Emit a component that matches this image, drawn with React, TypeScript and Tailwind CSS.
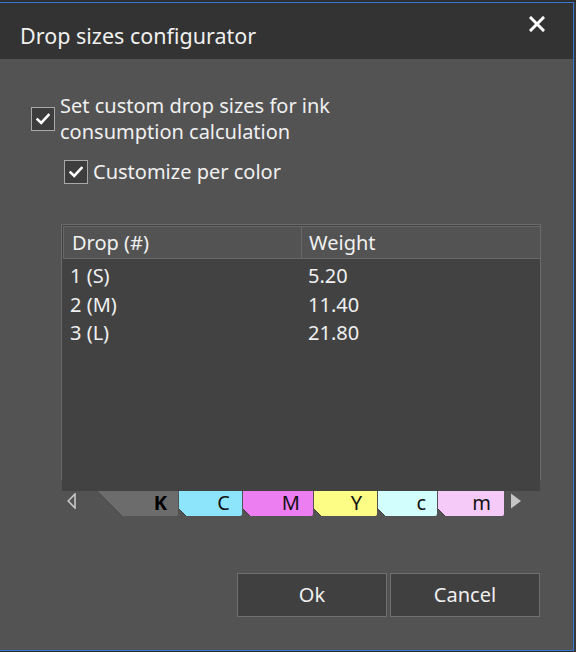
import React from "react";

const FONT = { fontFamily: '"Noto Sans", "Open Sans", sans-serif' };

function CheckBox() {
  return (
    <div className="w-[24px] h-[24px] border border-[#a9a9a9] bg-[#3d3d3d] flex items-center justify-center shrink-0">
      <svg width="14" height="12" viewBox="0 0 14 12">
        <path d="M1.5 6.5 L5.2 10 L12.5 2" fill="none" stroke="#ffffff" strokeWidth="2.6" strokeLinecap="square" />
      </svg>
    </div>
  );
}

type Tab = { label: string; bg: string; w: string; pr: string };

const tabs: Tab[] = [
  { label: "C", bg: "bg-[#8de5fb]", w: "w-[63px]", pr: "pr-[12px]" },
  { label: "M", bg: "bg-[#ec7ef1]", w: "w-[70px]", pr: "pr-[13px]" },
  { label: "Y", bg: "bg-[#fdfd85]", w: "w-[63px]", pr: "pr-[15px]" },
  { label: "c", bg: "bg-[#d2fefe]", w: "w-[59px]", pr: "pr-[11px]" },
  { label: "m", bg: "bg-[#f5c9f8]", w: "w-[66px]", pr: "pr-[13px]" },
];

const rows = [
  ["1 (S)", "5.20"],
  ["2 (M)", "11.40"],
  ["3 (L)", "21.80"],
];

export default function App() {
  return (
    <div className="w-[576px] h-[652px] bg-[#2c2c2c] flex flex-col overflow-hidden" style={FONT}>
      <div className="h-[2px] bg-[#2f2f2f] shrink-0" />
      <div className="flex flex-1">
        <div className="w-[574px] h-[649px] border-t border-r border-b border-[#3676d4] flex flex-col bg-[#535353] text-[#f0f0f0]">
          {/* title bar */}
          <div className="h-[56px] bg-[#333333] flex items-start justify-between shrink-0">
            <div className="pl-[20px] pt-[20px] text-[21.5px] leading-[26px]">Drop sizes configurator</div>
            <div className="pr-[28px] pt-[13px]">
              <svg width="16" height="16" viewBox="0 0 16 16">
                <path d="M2 2 L14 14 M14 2 L2 14" stroke="#ffffff" strokeWidth="3" strokeLinecap="square" />
              </svg>
            </div>
          </div>

          {/* body */}
          <div className="flex flex-col pt-[34px]">
            <div className="flex items-center pl-[31px] gap-[5px]">
              <CheckBox />
              <div className="text-[20px] leading-[26px]">
                Set custom drop sizes for ink
                <br />
                consumption calculation
              </div>
            </div>

            <div className="flex items-center pl-[64px] gap-[5px] mt-[14px]">
              <CheckBox />
              <div className="text-[20px] leading-[26px]">Customize per color</div>
            </div>

            {/* table panel */}
            <div className="ml-[61px] w-[480px] mt-[39px] flex flex-col">
              <div className="h-[256px] border border-b-0 border-[#6b6b6b] bg-[#424242] pt-[1px] pl-[1px]">
                <div className="flex h-[33px] bg-[#535353] border-t border-b border-l border-[#686868] text-[20px]">
                  <div className="w-[238px] border-r border-[#686868] pl-[8px] flex items-center">Drop (#)</div>
                  <div className="flex-1 pl-[7px] flex items-center">Weight</div>
                </div>
                <div className="pt-[3px] text-[20px]">
                  {rows.map(([d, w]) => (
                    <div key={d} className="flex h-[28.5px] items-center">
                      <div className="w-[239px] pl-[7px]">{d}</div>
                      <div className="flex-1 pl-[6px]">{w}</div>
                    </div>
                  ))}
                </div>
              </div>
              <div className="h-[11px] mx-[1px] bg-[#424242]" />
            </div>

            {/* color tabs */}
            <div className="flex h-[25px] items-stretch">
              <div className="w-[97px] pl-[67px] pt-[2px]">
                <svg width="9" height="16" viewBox="0 0 9 16">
                  <path d="M8 1 L1.2 8 L8 15 Z" fill="none" stroke="#c9c9c9" strokeWidth="1.6" />
                </svg>
              </div>
              <div className="relative w-[81px] flex items-center justify-end pr-[11px]">
                <svg className="absolute inset-0" width="81" height="25" viewBox="0 0 81 25">
                  <path d="M0 0 L81 0 L81 24 L80 25 L25 25 Z" fill="#6c6c6c" />
                  <path d="M0 0 L25 25" stroke="#4a4a4a" strokeWidth="1" />
                </svg>
                <span className="relative text-[20px] font-bold text-black leading-none -mt-[2px]">K</span>
              </div>
              {tabs.map((t) => (
                <div
                  key={t.label}
                  className={`relative ${t.w} ${t.bg} ml-[1px] flex items-center justify-end ${t.pr} rounded-br-[2px] text-[20px] text-[#111111] leading-none`}
                >
                  <svg className="absolute left-0 bottom-0" width="7" height="7" viewBox="0 0 7 7">
                    <path d="M0 0 L7 7 L0 7 Z" fill="#535353" />
                    <path d="M0 0 L7 7" stroke="#3d3d3d" strokeWidth="1" />
                  </svg>
                  <span className="relative -mt-[2px]">{t.label}</span>
                </div>
              ))}
              <div className="pl-[7px] pt-[2px]">
                <svg width="10" height="16" viewBox="0 0 10 16">
                  <path d="M0 0.5 L10 8 L0 15.5 Z" fill="#c4c4c4" />
                </svg>
              </div>
            </div>

            {/* buttons */}
            <div className="flex gap-[3px] pl-[237px] mt-[57px]">
              <div className="w-[150px] h-[44px] bg-[#404040] border border-[#6f6f6f] flex items-center justify-center text-[20px]">Ok</div>
              <div className="w-[150px] h-[44px] bg-[#404040] border border-[#6f6f6f] flex items-center justify-center text-[20px]">Cancel</div>
            </div>
          </div>
        </div>
        <div className="flex-1 bg-[#3a3a3a]" />
      </div>
    </div>
  );
}
